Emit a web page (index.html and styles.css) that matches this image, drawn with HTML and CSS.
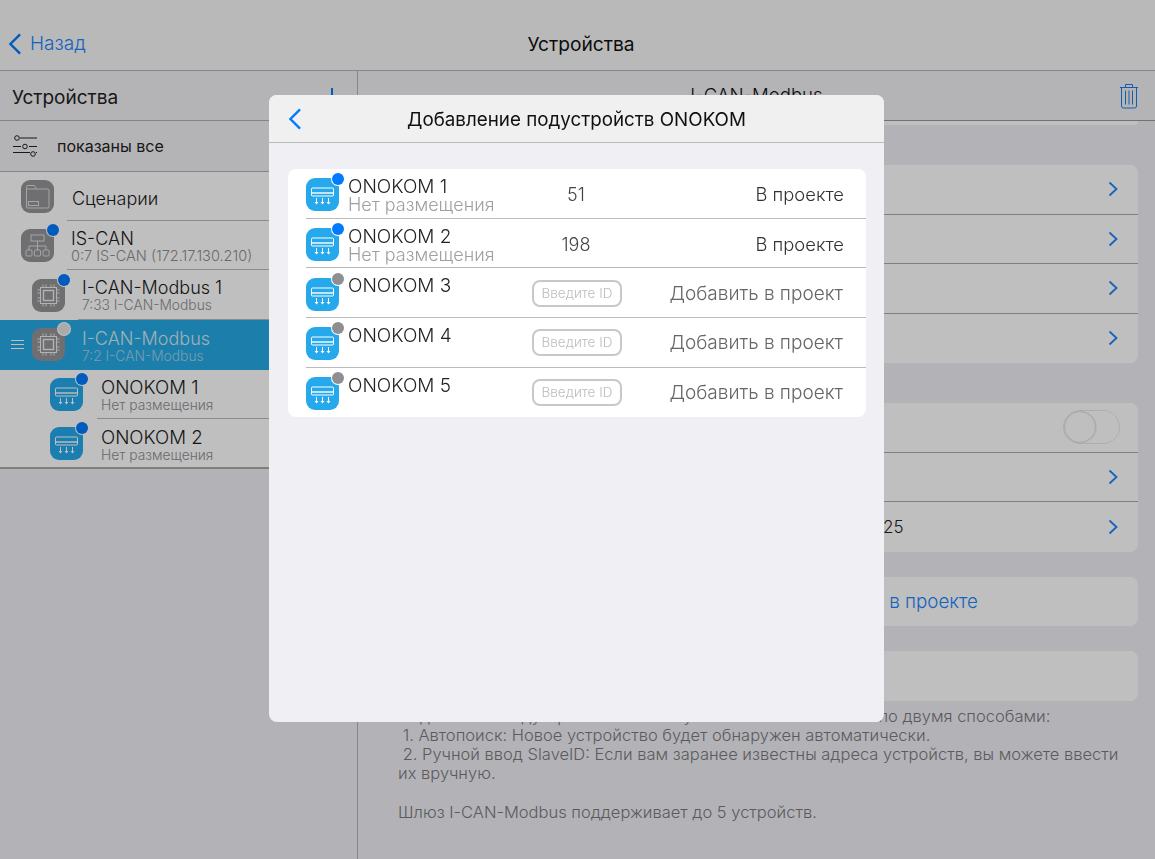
FILE: index.html
```html
<!DOCTYPE html>
<html lang="ru">
<head>
<meta charset="utf-8">
<title>Устройства</title>
<link rel="stylesheet" href="styles.css">
</head>
<body>
<svg class="defs" width="0" height="0" aria-hidden="true">
  <symbol id="ac" viewBox="0 0 33 33">
    <rect x="5.500" y="10" width="22" height="8" rx="1" fill="none" stroke="#fff" stroke-width="1"/>
    <rect x="6" y="14" width="21" height="2" fill="#fff" opacity=".7"/>
    <path d="M10.500 20v5.500M16.500 20v5.500M22.500 20v5.500" stroke="#fff" stroke-width="1" fill="none"/>
    <path d="M8.500 24l2 2.500 2-2.500zM14.500 24l2 2.500 2-2.500zM20.500 24l2 2.500 2-2.500z" fill="#fff"/>
  </symbol>
  <symbol id="chip" viewBox="0 0 33 33">
    <rect x="8.500" y="8.500" width="16" height="16" fill="none" stroke="#eee" stroke-width="1"/>
    <rect x="11.500" y="11.500" width="10" height="10" fill="none" stroke="#eee" stroke-width="1.400"/>
    <path d="M11 5.500v3M14 5.500v3M19 5.500v3M22 5.500v3M11 24.500v3M14 24.500v3M19 24.500v3M22 24.500v3M5.500 11h3M5.500 14h3M5.500 19h3M5.500 22h3M24.500 11h3M24.500 14h3M24.500 19h3M24.500 22h3" stroke="#eee" stroke-width=".9" fill="none"/>
  </symbol>
  <symbol id="net" viewBox="0 0 33 33">
    <rect x="10" y="6" width="13" height="6" fill="none" stroke="#ddd" stroke-width="1"/>
    <path d="M16.500 12v5M8 21v-4h17v4M16.500 17v4" fill="none" stroke="#ddd" stroke-width="1"/>
    <rect x="5" y="21" width="6" height="6" rx="1" fill="none" stroke="#ddd" stroke-width="1"/>
    <rect x="13.500" y="21" width="6" height="6" rx="1" fill="none" stroke="#ddd" stroke-width="1"/>
    <rect x="22" y="21" width="6" height="6" rx="1" fill="none" stroke="#ddd" stroke-width="1"/>
  </symbol>
  <symbol id="folder" viewBox="0 0 33 33">
    <path d="M5.500 9V6.500a1 1 0 0 1 1-1h7l2 3.500h11.500a1 1 0 0 1 1 1v17a1 1 0 0 1-1 1h-20.500a1 1 0 0 1-1-1z" fill="none" stroke="#ddd" stroke-width="1"/>
    <path d="M5.500 9h10" fill="none" stroke="#ddd" stroke-width="1"/>
    <rect x="7.500" y="21.500" width="10" height="4" fill="none" stroke="#ddd" stroke-width="1"/>
  </symbol>
  <symbol id="chev-r" viewBox="0 0 10 16">
    <path d="M1.500 1.500L8.500 8l-7 6.500" fill="none" stroke="currentColor" stroke-width="1.800"/>
  </symbol>
  <symbol id="chev-l" viewBox="0 0 15 24">
    <path d="M13 1.500L2.500 12 13 22.500" fill="none" stroke="currentColor" stroke-width="2.600"/>
  </symbol>
</svg>

<div class="app">
  <header class="topbar">
    <a class="back"><svg class="back-icon"><use href="#chev-l"/></svg><span>Назад</span></a>
    <h1 class="topbar-title">Устройства</h1>
  </header>

  <div class="main">
    <aside class="sidebar">
      <div class="side-head"><span>Устройства</span><span class="plus-stem"></span></div>
      <div class="filter">
        <svg class="filter-icon" viewBox="0 0 26 22">
          <g fill="none" stroke="#222" stroke-width="1">
            <path d="M7 3h17M0 11.500h8M16 11.500h8M0 17.500h17M23 17.500h1"/>
            <circle cx="4" cy="3" r="2.300"/><circle cx="12" cy="11.500" r="2.300"/><circle cx="20" cy="19" r="2.300"/>
          </g>
        </svg>
        <span>показаны все</span>
      </div>
      <ul class="tree">
        <li class="node lvl0 single">
          <span class="ico gray"><svg><use href="#folder"/></svg></span>
          <div class="node-text"><div class="node-name">Сценарии</div></div>
        </li>
        <li class="node lvl0">
          <span class="ico gray"><svg><use href="#net"/></svg><i class="dot blue"></i></span>
          <div class="node-text"><div class="node-name">IS-CAN</div><div class="node-sub addr">0:7 IS-CAN (172.17.130.210)</div></div>
        </li>
        <li class="node lvl1">
          <span class="ico gray"><svg><use href="#chip"/></svg><i class="dot blue"></i></span>
          <div class="node-text"><div class="node-name">I-CAN-Modbus 1</div><div class="node-sub">7:33 I-CAN-Modbus</div></div>
        </li>
        <li class="node lvl1 active">
          <span class="drag"></span>
          <span class="ico gray"><svg><use href="#chip"/></svg><i class="dot light"></i></span>
          <div class="node-text"><div class="node-name">I-CAN-Modbus</div><div class="node-sub">7:2 I-CAN-Modbus</div></div>
        </li>
        <li class="node lvl2">
          <span class="ico sky"><svg><use href="#ac"/></svg><i class="dot blue"></i></span>
          <div class="node-text"><div class="node-name">ONOKOM 1</div><div class="node-sub">Нет размещения</div></div>
        </li>
        <li class="node lvl2 last">
          <span class="ico sky"><svg><use href="#ac"/></svg><i class="dot blue"></i></span>
          <div class="node-text"><div class="node-name">ONOKOM 2</div><div class="node-sub">Нет размещения</div></div>
        </li>
      </ul>
    </aside>

    <section class="detail">
      <div class="detail-head">
        <span class="detail-title">I-CAN-Modbus</span>
        <svg class="trash" viewBox="0 0 20 26">
          <g fill="none" stroke="currentColor" stroke-width="1">
            <path d="M1 4.500h18M6.500 4V1.500h7V4M2.500 4.500V23a2 2 0 0 0 2 2h11a2 2 0 0 0 2-2V4.500"/>
            <path d="M6.500 7.500V21.500M10 7.500V21.500M13.500 7.500V21.500"/>
          </g>
        </svg>
      </div>
      <div class="scroll">
        <div class="group sliver"></div>
        <div class="group g1">
          <div class="row"><svg class="chev"><use href="#chev-r"/></svg></div>
          <div class="row"><svg class="chev"><use href="#chev-r"/></svg></div>
          <div class="row"><svg class="chev"><use href="#chev-r"/></svg></div>
          <div class="row"><svg class="chev"><use href="#chev-r"/></svg></div>
        </div>
        <div class="group g2">
          <div class="row"><span class="toggle"><span class="knob"></span></span></div>
          <div class="row"><svg class="chev"><use href="#chev-r"/></svg></div>
          <div class="row"><span class="row-value">25</span><svg class="chev"><use href="#chev-r"/></svg></div>
        </div>
        <div class="group g3"><div class="row action">Показать все устройства в проекте</div></div>
        <div class="group g4"><div class="row"></div></div>
        <p class="note">Подключить подустройства к шлюзу I-CAN-Modbus можно по двумя способами:<br>&nbsp;1. Автопоиск: Новое устройство будет обнаружен автоматически.<br>&nbsp;2. Ручной ввод SlaveID: Если вам заранее известны адреса устройств, вы можете ввести их вручную.<br><br>Шлюз I-CAN-Modbus поддерживает до 5 устройств.</p>
      </div>
    </section>
  </div>
</div>

<div class="overlay"></div>

<div class="modal">
  <div class="modal-head">
    <svg class="modal-back"><use href="#chev-l"/></svg>
    <h2 class="modal-title">Добавление подустройств ONOKOM</h2>
  </div>
  <div class="modal-body">
    <div class="card">
      <div class="m-row">
        <span class="ico bright"><svg><use href="#ac"/></svg><i class="dot vivid"></i></span>
        <div class="m-text"><div class="m-name">ONOKOM 1</div><div class="m-sub">Нет размещения</div></div>
        <div class="m-id">51</div>
        <div class="m-status">В проекте</div>
      </div>
      <div class="m-row">
        <span class="ico bright"><svg><use href="#ac"/></svg><i class="dot vivid"></i></span>
        <div class="m-text"><div class="m-name">ONOKOM 2</div><div class="m-sub">Нет размещения</div></div>
        <div class="m-id">198</div>
        <div class="m-status">В проекте</div>
      </div>
      <div class="m-row">
        <span class="ico bright"><svg><use href="#ac"/></svg><i class="dot grey"></i></span>
        <div class="m-text"><div class="m-name">ONOKOM 3</div></div>
        <div class="m-id"><span class="id-input">Введите ID</span></div>
        <div class="m-status add">Добавить в проект</div>
      </div>
      <div class="m-row">
        <span class="ico bright"><svg><use href="#ac"/></svg><i class="dot grey"></i></span>
        <div class="m-text"><div class="m-name">ONOKOM 4</div></div>
        <div class="m-id"><span class="id-input">Введите ID</span></div>
        <div class="m-status add">Добавить в проект</div>
      </div>
      <div class="m-row">
        <span class="ico bright"><svg><use href="#ac"/></svg><i class="dot grey"></i></span>
        <div class="m-text"><div class="m-name">ONOKOM 5</div></div>
        <div class="m-id"><span class="id-input">Введите ID</span></div>
        <div class="m-status add">Добавить в проект</div>
      </div>
    </div>
  </div>
</div>
</body>
</html>
```

FILE: styles.css
```css
* { box-sizing: border-box; }
html, body { margin: 0; height: 100%; overflow: hidden; }
body {
  font-family: Inter, "Liberation Sans", Arial, sans-serif;
  font-weight: 300;
  color: #222;
  background: #efeff4;
}
.defs { position: absolute; }
ul { list-style: none; margin: 0; padding: 0; }

.app { height: 859px; display: flex; flex-direction: column; }

.topbar {
  height: 71px;
  flex: none;
  background: #f7f7f7;
  border-bottom: 1.5px solid #b4b4b4;
  position: relative;
  display: flex;
  align-items: flex-end;
  justify-content: center;
  padding: 0 0 15px 7px;
}
.back {
  position: absolute;
  left: 8px;
  bottom: 15px;
  display: flex;
  align-items: center;
  gap: 8px;
  color: #1a84ff;
  font-size: 19px;
  line-height: 22px;
}
.back-icon { width: 14px; height: 22px; color: #007aff; }
.topbar-title { margin: 0; font-size: 19.200px; line-height: 22px; font-weight: 400; color: #111; }

.main { flex: 1; display: flex; min-height: 0; }

.sidebar {
  width: 358px;
  flex: none;
  border-right: 1px solid #b4b4b4;
  background: #efeff4;
}
.side-head {
  height: 50px;
  display: flex;
  align-items: center;
  justify-content: space-between;
  padding: 3px 24px 0 12px;
  font-size: 19px;
  font-weight: 400;
  background: #f0f0f4;
  border-bottom: 1px solid #b0b0b0;
}
.plus-stem { width: 2px; height: 18px; background: #007aff; }
.filter {
  height: 51px;
  display: flex;
  align-items: center;
  gap: 18px;
  padding: 0 0 0 13px;
  font-size: 16px;
  font-weight: 400;
  background: #f0f0f4;
  border-bottom: 1px solid #b0b0b0;
}
.filter-icon { width: 26px; height: 22px; flex: none; }

.tree { background: #fff; border-bottom: 2px solid #aaa; }
.node {
  height: 49.700px;
  display: flex;
  align-items: center;
  position: relative;
}
.single { height: 48.500px; }
.last { height: 48px; }
.lvl0 { padding-left: 21px; }
.lvl1 { padding-left: 32px; }
.lvl2 { padding-left: 50px; }
.ico {
  width: 33px;
  height: 33px;
  border-radius: 9px;
  flex: none;
  position: relative;
  display: block;
}
.ico svg { width: 33px; height: 33px; display: block; }
.gray { background: #949499; }
.sky, .bright { background: #25a9ec; }
.dot {
  position: absolute;
  right: -5px;
  top: -5px;
  width: 12px;
  height: 12px;
  border-radius: 50%;
  box-shadow: 0 0 0 1px #fff;
}
.blue, .vivid { background: #007aff; }
.grey { background: #8e8e93; }
.light { background: #e4e4e4; }

.node-text {
  flex: 1;
  align-self: stretch;
  margin-left: 13px;
  padding-left: 4px;
  display: flex;
  flex-direction: column;
  justify-content: center;
  border-bottom: 1px solid #bbb;
  padding-top: 1px;
}
.node:last-child .node-text { border-bottom: none; }
.lvl0 .node-text { padding-top: 3px; }
.lvl2 .node-text { margin-left: 14px; padding-top: 3px; }
.last .node-text { padding-top: 5px; }
.node-name { font-size: 18px; line-height: 19px; color: #1c1c1c; }
.lvl2 .node-name { font-size: 18.700px; }
.node-sub { font-size: 13.800px; line-height: 16px; color: #8e8e93; }
.node-sub.addr { font-size: 14.500px; }
.single .node-name { padding-top: 3px; padding-left: 1px; }
.active { background: #26a9e4; }
.active .node-text { border-bottom: none; padding-top: 3px; }
.active .node-name { color: #d7e9f3; }
.active .node-sub { color: #9fd2ea; }
.drag {
  position: absolute;
  left: 11px;
  top: 20px;
  width: 13px;
  height: 9px;
  border-top: 1px solid #fff;
  border-bottom: 1px solid #fff;
}
.drag::after {
  content: "";
  display: block;
  height: 1px;
  margin-top: 3px;
  background: #fff;
}

.detail { flex: 1; min-width: 0; display: flex; flex-direction: column; overflow: hidden; }
.detail-head {
  height: 50px;
  flex: none;
  background: #f0f0f4;
  border-bottom: 1.500px solid #999;
  position: relative;
  display: flex;
  align-items: center;
  justify-content: center;
  font-size: 18.600px;
  padding-bottom: 2px;
}
.detail-title { color: #111; }
.trash { position: absolute; right: 16px; top: 12px; width: 20px; height: 26px; color: #1a7de8; }
.scroll { padding: 0 17px 0 20px; }
.group { background: #fff; border-radius: 8px; overflow: hidden; }
.sliver { height: 4px; border-radius: 0 0 8px 8px; }
.g1, .g2 { margin-top: 40px; }
.g3, .g4 { margin-top: 25px; }
.row {
  height: 49.500px;
  display: flex;
  align-items: center;
  justify-content: flex-end;
  padding-right: 20px;
  border-bottom: 1px solid #aaa;
  font-size: 18px;
  position: relative;
}
.row:last-child { border-bottom: none; }
.chev { width: 10px; height: 16px; color: #1a84ff; }
.row-value { position: absolute; left: 505px; font-size: 17px; }
.action { padding-right: 160px; color: #1a84ff; font-size: 18.800px; }
.toggle {
  width: 57px;
  height: 34px;
  border-radius: 17px;
  border: 1px solid #e8e8e8;
  position: relative;
  margin-right: -2px;
}
.knob {
  position: absolute;
  left: 0;
  top: 0;
  width: 32px;
  height: 32px;
  border-radius: 50%;
  background: #fff;
  border: 1px solid #dedede;
  box-shadow: 1px 0 1px rgba(0,0,0,.06);
}
.note {
  margin: 6px 5px 0 20px;
  font-size: 16.500px;
  line-height: 19.300px;
  color: #7a7a7f;
}

.overlay { position: fixed; inset: 0; background: rgba(0,0,0,.25); }

.modal {
  position: fixed;
  left: 269px;
  top: 95px;
  width: 615px;
  height: 627px;
  border-radius: 8px;
  overflow: hidden;
  background: #efeff4;
}
.modal-head {
  height: 48px;
  background: #f0f0f0;
  border-bottom: 1.500px solid #b9b9b9;
  display: flex;
  align-items: center;
  justify-content: center;
  position: relative;
  padding-top: 2px;
}
.modal-back { position: absolute; left: 19px; top: 13px; width: 14px; height: 22px; color: #007aff; }
.modal-title { margin: 0; font-size: 18.800px; font-weight: 400; color: #111; }
.modal-body { padding: 26px 18px 0 19px; }
.card { background: #fff; border-radius: 8px; overflow: hidden; }
.m-row {
  height: 49.700px;
  display: flex;
  align-items: center;
  padding: 2px 22px 0 18px;
  position: relative;
}
.m-row + .m-row::before {
  content: "";
  position: absolute;
  left: 18px;
  right: 0;
  top: -1px;
  height: 1px;
  background: #bbb;
}
.m-text { width: 168px; margin-left: 9px; align-self: flex-start; padding-top: 6px; }
.m-name { font-size: 19px; line-height: 19px; color: #222; }
.m-sub { font-size: 18px; line-height: 18px; color: #a0a0a0; }
.m-id { width: 90px; text-align: center; font-size: 18px; margin-left: 15px; color: #444; }
.id-input {
  display: block;
  width: 90px;
  height: 27px;
  border: 2px solid #c8c8c8;
  border-radius: 8px;
  font-size: 13.500px;
  line-height: 23px;
  color: #bdbdbd;
  position: relative;
  top: -1px;
  left: 1px;
}
.m-status { flex: 1; text-align: right; font-size: 18.400px; color: #333; margin-bottom: 2px; }
.m-status.add { color: #666; font-size: 19px; padding-right: 1px; }
```
